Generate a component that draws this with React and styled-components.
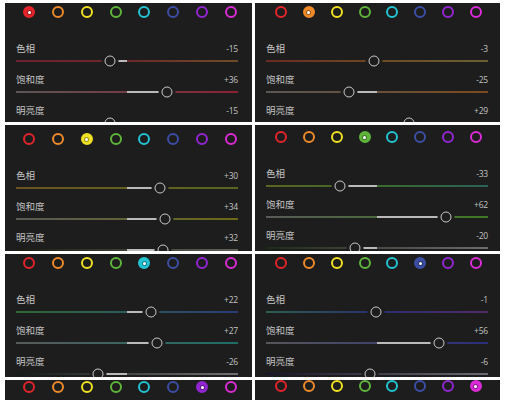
import React from "react";
import styled, { createGlobalStyle } from "styled-components";

const Global = createGlobalStyle`
  html, body { margin: 0; padding: 0; background: #ffffff; }
  #root { width: 505px; height: 400px; }
`;

const BG = "#1d1d1d";

const COLORS = [
  "#e3242b",
  "#ee8a2a",
  "#efe024",
  "#5fb43c",
  "#22c3d3",
  "#3b4ea3",
  "#9325d3",
  "#db2bd6",
];

const LABELS = ["色相", "饱和度", "明亮度"];

const PANELS = [
  { sel: 0, pad: 3, vals: [-15, 36, -15], tracks: [["#6e2233", "#6c2828", "#6e4c27"], ["#5c5656", "#8a2234"], ["#1e1414", "#6a5555"]] },
  { sel: 1, pad: 3, vals: [-3, -25, 29], tracks: [["#6a2a22", "#6e4a22", "#6a6030"], ["#5a5754", "#7a4a1e"], ["#201810", "#6a6258"]] },
  { sel: 2, pad: 8, vals: [30, 34, 32], tracks: [["#6a5220", "#646020", "#566622"], ["#5a5a56", "#6a6a16"], ["#1c1c10", "#606058"]] },
  { sel: 3, pad: 6, vals: [-33, 62, -20], tracks: [["#5a6420", "#3a6a2c", "#2a6258"], ["#585a56", "#3e7a24"], ["#1e2a18", "#6c6c6c"]] },
  { sel: 4, pad: 3, vals: [22, 27, -26], tracks: [["#2e6a34", "#2a5c5c", "#2a3a78"], ["#585a5a", "#1e6e66"], ["#141c1c", "#707070"]] },
  { sel: 5, pad: 3, vals: [-1, 56, -6], tracks: [["#2a6050", "#2a2e70", "#522a6a"], ["#56565a", "#2a2e7a"], ["#161628", "#6a6a72"]] },
  { sel: 6, pad: 1, compact: true },
  { sel: 7, pad: 0, compact: true },
];

const Grid = styled.div`
  box-sizing: border-box;
  width: 505px;
  height: 400px;
  overflow: hidden;
  padding: 3px 0 0 5px;
  display: grid;
  grid-template-columns: 247px 245px;
  grid-template-rows: 119px 126px 123px 20px;
  column-gap: 3px;
  row-gap: 3px;
`;

const Panel = styled.section`
  background: ${BG};
  overflow: hidden;
  box-sizing: border-box;
  padding-top: ${(p) => p.$pad}px;
`;

const Swatches = styled.div`
  display: flex;
  justify-content: space-between;
  height: 12px;
  padding: ${(p) => (p.$right ? "0 18px 0 20px" : "0 15px 0 18px")};
`;

const Swatch = styled.div`
  box-sizing: border-box;
  width: 12px;
  height: 12px;
  border-radius: 50%;
  border: 2px solid ${(p) => p.$color};
  background: ${(p) => (p.$selected ? p.$color : "transparent")};
  display: flex;
  align-items: center;
  justify-content: center;
`;

const Dot = styled.span`
  width: 3px;
  height: 3px;
  border-radius: 50%;
  background: #ffffff;
  box-shadow: 0 0 0 1px rgba(0, 0, 0, 0.35);
`;

const Controls = styled.div`
  margin-top: 24px;
  padding: ${(p) => (p.$right ? "0 12px 0 11px" : "0 14px 0 11px")};
`;

const LabelRow = styled.div`
  display: flex;
  justify-content: space-between;
  align-items: center;
  height: 13px;
  line-height: 13px;
`;

const Label = styled.span`
  font-family: "Noto Sans CJK SC", "Noto Sans", sans-serif;
  font-size: 9.5px;
  color: #c4c4c4;
`;

const Value = styled.span`
  font-family: "Open Sans", "Noto Sans", sans-serif;
  font-size: 8.5px;
  color: #c2c2c2;
  letter-spacing: -0.2px;
`;

const SliderRow = styled.div`
  height: 12px;
  margin-bottom: 6px;
  padding-top: 5px;
  box-sizing: border-box;
`;

const Track = styled.div`
  position: relative;
  height: 2px;
  background: linear-gradient(to right, ${(p) => p.$stops.join(", ")});
`;

const Fill = styled.div`
  position: absolute;
  top: 0;
  height: 2px;
  background: #bababa;
`;

const Thumb = styled.div`
  position: absolute;
  top: 1px;
  width: 11px;
  height: 11px;
  box-sizing: border-box;
  border-radius: 50%;
  border: 1.5px solid #c9c9c9;
  background: ${BG};
  box-shadow: 0 0 0 3px ${BG};
  transform: translate(-50%, -50%);
`;

function Slider({ value, stops }) {
  const pos = 50 + value / 2;
  const left = Math.min(50, pos);
  const width = Math.abs(value / 2);
  return (
    <SliderRow>
      <Track $stops={stops}>
        <Fill style={{ left: `${left}%`, width: `${width}%` }} />
        <Thumb style={{ left: `${pos}%` }} />
      </Track>
    </SliderRow>
  );
}

function fmt(v) {
  return v > 0 ? `+${v}` : `${v}`;
}

function HslPanel({ data, right }) {
  return (
    <Panel $pad={data.pad}>
      <Swatches $right={right}>
        {COLORS.map((c, i) => (
          <Swatch key={c} $color={c} $selected={i === data.sel}>
            {i === data.sel && <Dot />}
          </Swatch>
        ))}
      </Swatches>
      {!data.compact && (
        <Controls $right={right}>
          {LABELS.map((l, i) => (
            <React.Fragment key={l}>
              <LabelRow>
                <Label>{l}</Label>
                <Value>{fmt(data.vals[i])}</Value>
              </LabelRow>
              <Slider value={data.vals[i]} stops={data.tracks[i]} />
            </React.Fragment>
          ))}
        </Controls>
      )}
    </Panel>
  );
}

export default function App() {
  return (
    <>
      <Global />
      <Grid>
        {PANELS.map((p, i) => (
          <HslPanel key={i} data={p} right={i % 2 === 1} />
        ))}
      </Grid>
    </>
  );
}
